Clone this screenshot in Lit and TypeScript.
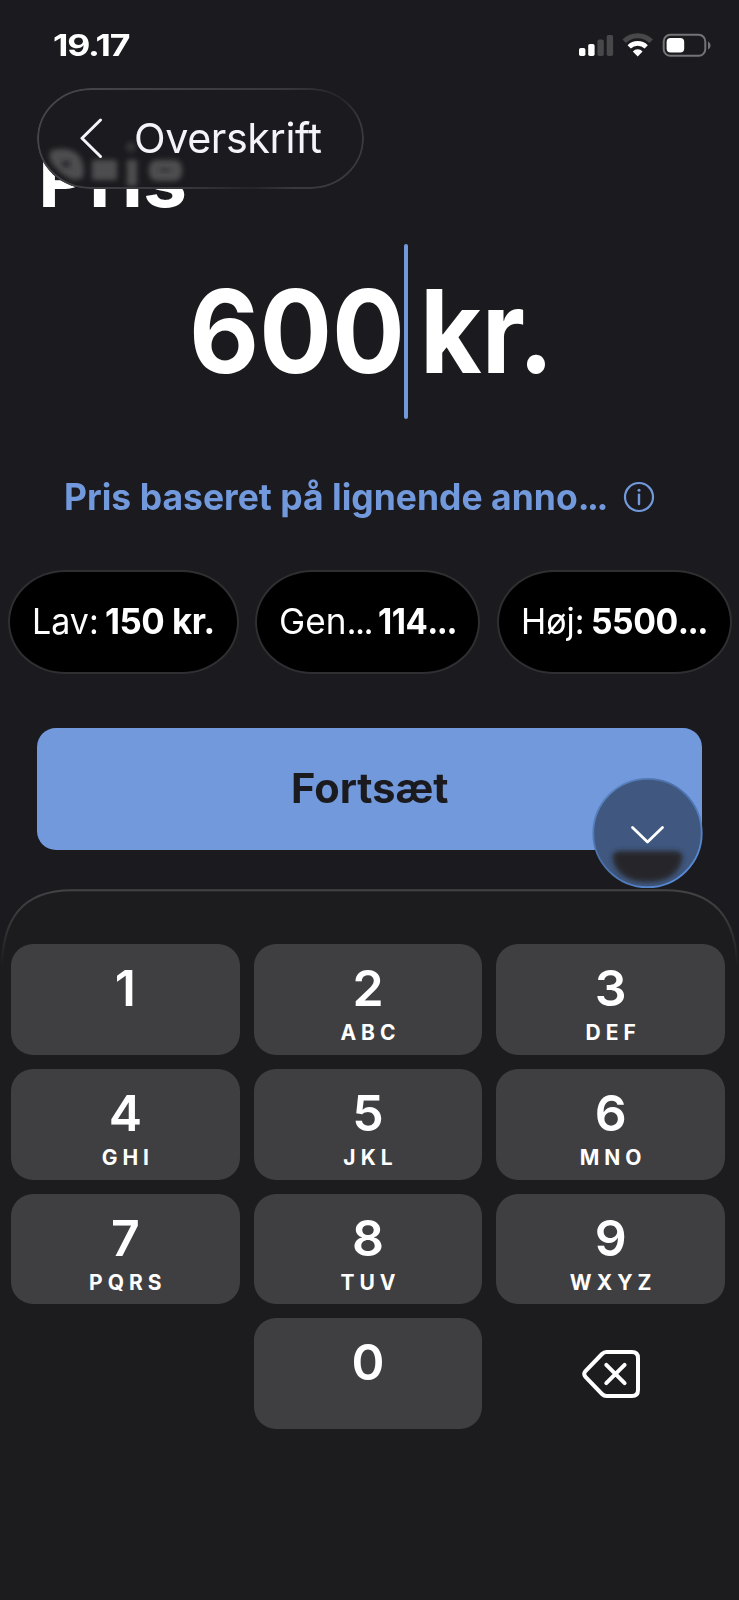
import { LitElement, html, css } from "lit";
import { customElement, property, query } from "lit/decorators.js";

/* A single line of text condensed or stretched to a given advance width. */
@customElement("fit-label")
export class FitLabel extends LitElement {
  @property({ type: Number }) width = 100;
  @query(".line") line!: HTMLElement;

  static styles = css`
    :host { display: block; flex: none; white-space: nowrap; }
    .line { display: inline-block; transform-origin: 0 50%; vertical-align: top; }
  `;

  firstUpdated() {
    this.style.width = this.width + "px";
    const natural = this.line.offsetWidth;
    if (natural) this.line.style.transform = `scaleX(${this.width / natural})`;
  }

  render() {
    return html`<span class="line"><slot></slot></span>`;
  }
}

@customElement("status-bar")
export class StatusBar extends LitElement {
  static styles = css`
    :host { display: flex; justify-content: space-between; height: 88px; padding: 0 28px 0 53px; box-sizing: border-box; }
    .time { font-size: 30px; font-weight: 700; line-height: 91px; letter-spacing: -1px; color: #fff; }
    svg { display: block; }
  `;

  render() {
    return html`
      <fit-label class="time" width="76">19.17</fit-label>
      <svg width="133" height="88" viewBox="578 0 133 88">
        <rect x="579" y="48" width="6.4" height="8" rx="1.8" fill="#fff" />
        <rect x="588.2" y="44" width="6.4" height="12" rx="1.8" fill="#fff" />
        <rect x="597.4" y="39.5" width="6.4" height="16.5" rx="1.8" fill="#48484b" />
        <rect x="606.7" y="35" width="6.4" height="21" rx="1.8" fill="#48484b" />
        <path d="M624.2 41.2 A19.4 19.4 0 0 1 651.2 41.2" fill="none" stroke="#48484b" stroke-width="5" />
        <path d="M629.2 46.9 A12 12 0 0 1 646.2 46.9" fill="none" stroke="#fff" stroke-width="4.6" />
        <path d="M637.7 56.4 L632.8 51.4 A6.8 6.8 0 0 1 642.6 51.4 Z" fill="#fff" />
        <rect x="663.7" y="34.8" width="41.6" height="21" rx="6.6" fill="none" stroke="#747477" stroke-width="2" />
        <rect x="666.6" y="38" width="17.6" height="14.6" rx="4" fill="#fff" />
        <path d="M708 41.4 C711.4 43 711.4 48 708 49.6 Z" fill="#747477" />
      </svg>
    `;
  }
}

@customElement("back-pill")
export class BackPill extends LitElement {
  static styles = css`
    :host { display: block; position: relative; width: 327px; height: 101px; box-sizing: border-box; border-radius: 54px / 50.5px; background: #1b1b1f; overflow: hidden; }
    .refraction { position: absolute; inset: 0; }
    .content { position: relative; display: flex; align-items: center; height: 101px; padding-left: 42px; box-sizing: border-box; }
    .chevron { flex: none; display: block; margin-right: 31px; }
    .title { font-size: 41.5px; font-weight: 400; line-height: 99px; letter-spacing: -0.4px; color: #f4f3fa; }
  `;

  render() {
    return html`
      <svg class="refraction" width="327" height="101" viewBox="37 88 327 101">
        <defs>
          <filter id="soft" x="-20%" y="-40%" width="140%" height="180%"><feGaussianBlur stdDeviation="2.6" /></filter>
          <linearGradient id="rim" x1="0" y1="0" x2="1" y2="0.3">
            <stop offset="0" stop-color="#48484c" />
            <stop offset="0.7" stop-color="#38383c" />
            <stop offset="0.88" stop-color="#252529" />
            <stop offset="1" stop-color="#3a3a3e" />
          </linearGradient>
        </defs>
        <g filter="url(#soft)" fill="#4d4d50">
          <path d="M50 151 q14 -5 25 1 q11 8 8 26 l-9 2 q-14 -4 -24 -20 z" />
          <rect x="92" y="160" width="25" height="20" rx="2" />
          <rect x="127" y="160" width="10" height="26" />
          <circle cx="131" cy="147" r="5" fill="#343437" />
          <rect x="149" y="160" width="33" height="21" rx="8" />
        </g>
        <ellipse cx="66" cy="164" rx="5" ry="3.5" fill="#2c2c30" filter="url(#soft)" />
        <ellipse cx="165" cy="170" rx="6" ry="2" fill="#343438" filter="url(#soft)" />
        <rect x="38" y="89" width="325" height="99" rx="53" ry="49.5" fill="none" stroke="url(#rim)" stroke-width="2" />
      </svg>
      <div class="content">
        <svg class="chevron" width="24" height="42" viewBox="0 0 24 42">
          <path d="M21.5 2 L3 20.3 L21.5 38.5" fill="none" stroke="#f4f3fa" stroke-width="3" stroke-linecap="round" stroke-linejoin="round" />
        </svg>
        <fit-label class="title" width="188">Overskrift</fit-label>
      </div>
    `;
  }
}

@customElement("price-chip")
export class PriceChip extends LitElement {
  @property() label = "";
  @property() value = "";
  @property({ type: Number }) labelWidth = 60;
  @property({ type: Number }) valueWidth = 60;

  static styles = css`
    :host { display: flex; align-items: center; height: 104px; box-sizing: border-box; border: 2px solid #2f2f32; border-radius: 57px / 52px; background: #000; color: #fff; font-size: 35.5px; line-height: 98px; gap: 6px; padding: 0 0 1px 22px; }
    .label { font-weight: 400; }
    .value { font-weight: 700; letter-spacing: -0.5px; }
    .dots { letter-spacing: -1.6px; }
  `;

  /* A cut-off text gets its dots set tighter than its letters. */
  private clipped(text: string) {
    return text.endsWith("...") ? html`${text.slice(0, -3)}<span class="dots">...</span>` : text;
  }

  render() {
    return html`
      <fit-label class="label" .width=${this.labelWidth}>${this.clipped(this.label)}</fit-label>
      <fit-label class="value" .width=${this.valueWidth}>${this.clipped(this.value)}</fit-label>
    `;
  }
}

@customElement("key-pad")
export class KeyPad extends LitElement {
  static styles = css`
    :host { display: block; position: relative; height: 711px; box-sizing: border-box; padding: 55px 14px 0 11px; background: #1c1c1e; border-radius: 66px 66px 0 0; }
    .edge { position: absolute; left: 0; top: 0; display: block; }
    .grid { position: relative; display: grid; grid-template-columns: repeat(3, 1fr); grid-auto-rows: 110.8px; gap: 14px; }
    .key { display: flex; flex-direction: column; align-items: center; border-radius: 22px; background: #3f3f41; color: #fff; }
    .blank { background: none; }
    .digit { font-size: 50px; font-weight: 620; line-height: 60px; margin-top: 14px; }
    .letters { font-size: 21px; font-weight: 700; line-height: 24px; letter-spacing: 5px; margin: 3px -5px 0 0; }
    .erase { display: block; margin: 31px 0 0 2px; }
  `;

  render() {
    const keys = [["1", ""], ["2", "ABC"], ["3", "DEF"], ["4", "GHI"], ["5", "JKL"], ["6", "MNO"], ["7", "PQRS"], ["8", "TUV"], ["9", "WXYZ"]];
    return html`
      <svg class="edge" width="739" height="90" viewBox="0 0 739 90">
        <defs>
          <linearGradient id="fade" x1="0" y1="0" x2="0" y2="90" gradientUnits="userSpaceOnUse">
            <stop offset="0" stop-color="#434346" />
            <stop offset="0.35" stop-color="#38383b" />
            <stop offset="0.85" stop-color="#1c1c1e" />
          </linearGradient>
        </defs>
        <path d="M2 80 C2 30 22 1.2 72 1.2 H665 C715 1.2 737 30 737 80" fill="none" stroke="url(#fade)" stroke-width="2" />
      </svg>
      <div class="grid">
        ${keys.map(([digit, letters]) => html`
          <div class="key"><span class="digit">${digit}</span><span class="letters">${letters}</span></div>`)}
        <div></div>
        <div class="key"><span class="digit">0</span></div>
        <div class="key blank">
          <svg class="erase" width="60" height="50" viewBox="0 0 60 50">
            <path d="M24.5 3 H50 Q56 3 56 9 V41 Q56 47 50 47 H24.5 Q22 47 20 45 L3.5 28 Q1 25 3.5 22 L20 5 Q22 3 24.5 3 Z" fill="none" stroke="#fff" stroke-width="4" />
            <path d="M24.3 15.8 L42.6 34.1 M42.6 15.8 L24.3 34.1" fill="none" stroke="#fff" stroke-width="4" stroke-linecap="round" />
          </svg>
        </div>
      </div>
    `;
  }
}

@customElement("app-root")
export class AppRoot extends LitElement {
  static styles = css`
    :host { display: block; width: 739px; height: 1600px; overflow: hidden; background: #1b1b1f; font-family: Inter, Roboto, sans-serif; }
    .header { position: relative; height: 140px; }
    .pill { position: absolute; left: 37px; top: 0; }
    .heading { margin: 0; padding: 52px 0 0 38px; font-size: 74px; font-weight: 700; line-height: 80px; color: #fff; }
    .price { display: flex; align-items: center; height: 175px; margin-top: 16px; padding-left: 189px; font-size: 115px; font-weight: 700; line-height: 176px; color: #fff; }
    .caret { flex: none; width: 4px; height: 175px; margin: 0 12px 0 -1px; border-radius: 2px; background: #7199dc; }
    .hint { display: flex; align-items: center; height: 50px; margin-top: 53px; padding-left: 64px; gap: 17px; color: #7199dc; font-size: 36.5px; font-weight: 650; line-height: 50px; }
    .dots { letter-spacing: -2.5px; }
    .info { display: block; }
    .chips { display: grid; grid-template-columns: 231px 225px 235px; gap: 16.5px; margin: 48px 0 0 7.5px; }
    .actions { position: relative; margin: 54px 37px 0; }
    .submit { display: flex; justify-content: center; height: 122px; border-radius: 19px; background: #7199dc; color: #1b1b1f; font-size: 41px; font-weight: 650; line-height: 121px; }
    .hide { position: absolute; left: 554.5px; top: 49px; z-index: 1; }
    .pad { margin-top: 39px; }
  `;

  render() {
    return html`
      <status-bar></status-bar>
      <div class="header">
        <h1 class="heading"><fit-label width="149">Pris</fit-label></h1>
        <back-pill class="pill"></back-pill>
      </div>
      <div class="price">
        <fit-label width="216">600</fit-label>
        <span class="caret"></span>
        <fit-label width="134">kr.</fit-label>
      </div>
      <div class="hint">
        <fit-label width="542">Pris baseret på lignende anno<span class="dots">...</span></fit-label>
        <svg class="info" width="32" height="32" viewBox="0 0 32 32">
          <circle cx="16" cy="16" r="14" fill="none" stroke="#7199dc" stroke-width="2.2" />
          <circle cx="16" cy="9.2" r="1.5" fill="#7199dc" />
          <path d="M16 13.6 V23" stroke="#7199dc" stroke-width="2.4" stroke-linecap="round" />
        </svg>
      </div>
      <div class="chips">
        <price-chip label="Lav:" value="150 kr." .labelWidth=${67} .valueWidth=${110}></price-chip>
        <price-chip label="Gen..." value="114..." .labelWidth=${93} .valueWidth=${78}></price-chip>
        <price-chip label="Høj:" value="5500..." .labelWidth=${64} .valueWidth=${116}></price-chip>
      </div>
      <div class="actions">
        <div class="submit"><fit-label width="158">Fortsæt</fit-label></div>
        <svg class="hide" width="111" height="112" viewBox="-55.5 -56 111 112">
          <defs>
            <filter id="haze" x="-30%" y="-50%" width="160%" height="200%"><feGaussianBlur stdDeviation="2.6" /></filter>
            <linearGradient id="ring" x1="0" y1="0" x2="1" y2="1">
              <stop offset="0" stop-color="#5f8cd0" />
              <stop offset="0.4" stop-color="#4a6fa6" />
              <stop offset="1" stop-color="#5a93e6" />
            </linearGradient>
          </defs>
          <circle r="54.5" fill="#40587f" />
          <path d="M-27 18 H27 Q35 18 35 25 Q30 49 0 49 Q-30 49 -35 25 Q-35 18 -27 18 Z" fill="#262629" filter="url(#haze)" />
          <circle r="54.2" fill="none" stroke="url(#ring)" stroke-width="1.8" />
          <path d="M-15 -5.5 L0 9 L15 -5.5" fill="none" stroke="#fff" stroke-width="2.8" stroke-linecap="round" stroke-linejoin="round" />
        </svg>
      </div>
      <key-pad class="pad"></key-pad>
    `;
  }
}
